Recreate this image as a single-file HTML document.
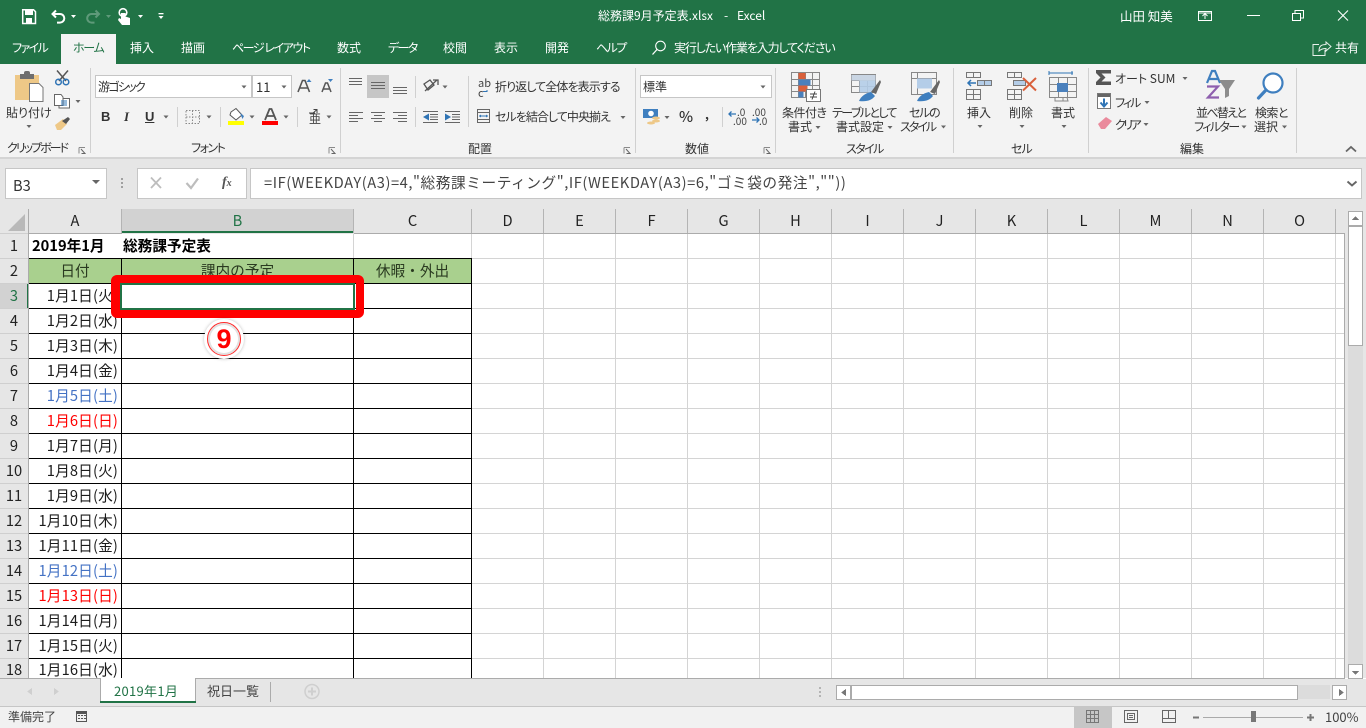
<!DOCTYPE html>
<html lang="ja"><head><meta charset="utf-8"><title>総務課9月予定表.xlsx - Excel</title>
<style>
html,body{margin:0;padding:0;width:1366px;height:728px;overflow:hidden;background:#fff}
body{position:relative;font-family:"Noto Sans CJK JP","Liberation Sans",sans-serif;font-size:12px;color:#333}
.r{position:absolute}
.t{position:absolute;white-space:nowrap;line-height:16px;font-feature-settings:"palt"}
.w{color:#fff}
.c{position:absolute;white-space:nowrap;line-height:20px;font-size:14.67px;color:#1c1c1c;text-align:right;right:1248px;letter-spacing:.15px}
.n{position:absolute;left:0;width:28px;text-align:center;line-height:20px;font-size:14.67px;color:#222}
.h{position:absolute;top:211px;line-height:20px;font-size:14.67px;text-align:center;color:#222}
svg{position:absolute;left:0;top:0}
</style></head><body>
<!-- backgrounds -->
<div class="r" style="left:0;top:0;width:1366px;height:64px;background:#217346"></div>
<div class="r" style="left:61px;top:34px;width:55px;height:30px;background:#f3f3f3"></div>
<div class="r" style="left:0;top:64px;width:1366px;height:93px;background:#f3f3f3"></div>
<div class="r" style="left:0;top:157px;width:1366px;height:2px;background:#d4d4d4"></div>
<div class="r" style="left:0;top:159px;width:1366px;height:519px;background:#e6e6e6"></div>
<div class="r" style="left:5px;top:168px;width:100px;height:29px;background:#fff;border:1px solid #c6c6c6"></div>
<div class="r" style="left:137px;top:168px;width:108px;height:29px;background:#fff;border:1px solid #c6c6c6"></div>
<div class="r" style="left:250px;top:168px;width:1110px;height:29px;background:#fff;border:1px solid #c6c6c6"></div>
<!-- sheet -->
<div class="r" style="left:29px;top:234px;width:1315px;height:444px;background:#fff"></div>
<div class="r" style="left:122px;top:209px;width:231px;height:22px;background:#d2d2d2"></div>
<div class="r" style="left:122px;top:231px;width:232px;height:2px;background:#217346"></div>
<div class="r" style="left:0;top:284px;width:28px;height:24px;background:#d2d2d2"></div>
<div class="r" style="left:27px;top:283px;width:2px;height:25px;background:#217346"></div>
<div class="r" style="left:29px;top:259px;width:442px;height:24px;background:#a9d08e"></div>

<svg width="1366" height="728" viewBox="0 0 1366 728" xmlns="http://www.w3.org/2000/svg" shape-rendering="crispEdges">
<!-- grid lines -->
<path fill="none" stroke="#d4d4d4" stroke-width="1" d="M472 258.5H1344M472 283.5H1344M472 308.5H1344M472 333.5H1344M472 358.5H1344M472 383.5H1344M472 408.5H1344M472 433.5H1344M472 458.5H1344M472 483.5H1344M472 508.5H1344M472 533.5H1344M472 558.5H1344M472 583.5H1344M472 608.5H1344M472 633.5H1344M472 658.5H1344
M543.5 234V678M615.5 234V678M687.5 234V678M759.5 234V678M831.5 234V678M903.5 234V678M975.5 234V678M1047.5 234V678M1119.5 234V678M1191.5 234V678M1263.5 234V678M1335.5 234V678M353.5 234V258M471.5 234V258"/>
<!-- black table lines -->
<path fill="none" stroke="#000" stroke-width="1" d="M29 258.5H472M29 283.5H472M29 308.5H472M29 333.5H472M29 358.5H472M29 383.5H472M29 408.5H472M29 433.5H472M29 458.5H472M29 483.5H472M29 508.5H472M29 533.5H472M29 558.5H472M29 583.5H472M29 608.5H472M29 633.5H472M29 658.5H472M121.5 258V678M353.5 258V678M471.5 258V678"/>
<!-- headers borders -->
<path fill="none" stroke="#ababab" stroke-width="1" d="M28.5 209V678M29 233.5H122M354 233.5H1345M1344.5 233V678M0 678.5H1345"/>
<path fill="none" stroke="#b4b4b4" stroke-width="1" d="M121.5 209V233M353.5 209V233M471.5 209V233M543.5 209V233M615.5 209V233M687.5 209V233M759.5 209V233M831.5 209V233M903.5 209V233M975.5 209V233M1047.5 209V233M1119.5 209V233M1191.5 209V233M1263.5 209V233M1335.5 209V233"/>
<path fill="none" stroke="#cfcfcf" stroke-width="1" d="M0 233.5H28M0 258.5H28M0 283.5H28M0 308.5H28M0 333.5H28M0 358.5H28M0 383.5H28M0 408.5H28M0 433.5H28M0 458.5H28M0 483.5H28M0 508.5H28M0 533.5H28M0 558.5H28M0 583.5H28M0 608.5H28M0 633.5H28M0 658.5H28"/>
<g shape-rendering="auto">
<polygon points="25,214 25,231 8,231" fill="#b9b9b9"/>
<!-- QAT -->
<path d="M22.7 9.7H33.5L35.5 11.7V23.5H22.7Z" fill="none" stroke="#fff" stroke-width="1.5"/>
<rect x="25" y="10" width="8" height="5" fill="#fff"/><rect x="26" y="18" width="6" height="5.5" fill="#fff"/>
<path d="M56 10.5 52.5 14 56 17.5M53 14H60A4.3 4.3 0 0 1 60 22.6H57" fill="none" stroke="#fff" stroke-width="2"/>
<path d="M95.5 10.5 99 14 95.5 17.5M98.5 14H91.5A4.3 4.3 0 0 0 91.5 22.6H94.5" fill="none" stroke="#5f9a7a" stroke-width="2"/>
<path d="M71 15h5l-2.500 3z" fill="#fff"/><path d="M106 15h5l-2.500 3z" fill="#5f9a7a"/>
<path d="M138 15h5l-2.500 3zM158.500 16h5l-2.500 3z" fill="#fff"/><rect x="158.500" y="13" width="5" height="1.300" fill="#fff"/>
<circle cx="123" cy="12.500" r="3.800" fill="none" stroke="#fff" stroke-width="1.600"/>
<path d="M121 13V19L119 18 118 20 122 25H130V18L125.500 16.500V13Z" fill="#fff"/>
<!-- window controls -->
<path d="M1198.500 11.500H1211.500V20.500H1198.500ZM1205 19V14M1202.500 16 1205 13.500 1207.500 16M1198.500 13H1211.500" fill="none" stroke="#fff" stroke-width="1"/>
<path d="M1247 15.500H1260" stroke="#fff" stroke-width="1"/>
<path d="M1292.500 13.500H1300.500V20.500H1292.500ZM1295 13V10.500H1303.500V18H1301" fill="none" stroke="#fff" stroke-width="1"/>
<path d="M1338 10.500 1348 20.500M1348 10.500 1338 20.500" stroke="#fff" stroke-width="1.100"/>
<path d="M1319 44.500H1313V55.500H1325V50M1319 51C1319 45.500 1322 44.500 1326 44.500V42L1331 46.500 1326 51V48.500C1323 48.500 1321 49 1319 51Z" fill="none" stroke="#e8f0ea" stroke-width="1"/>
<circle cx="660.500" cy="46" r="4.800" fill="none" stroke="#fff" stroke-width="1.100"/><path d="M657 49.500 652.500 54.500" stroke="#fff" stroke-width="1.300"/>
<!-- clipboard -->
<path d="M15 75H39V84H29V100H15Z" fill="#eec887"/>
<rect x="20" y="74" width="14" height="5" fill="#6e6e6e"/><rect x="24" y="71" width="6" height="5" rx="2" fill="#6e6e6e"/>
<path d="M29.500 83.500H39L43 87.500V101.500H29.500Z" fill="#fff" stroke="#777" stroke-width="1"/>
<path d="M57 70.500 66 81M68 70.500 59 81" stroke="#555" stroke-width="1.500" fill="none"/>
<circle cx="58.500" cy="82" r="2.800" fill="none" stroke="#2f74b5" stroke-width="1.500"/><circle cx="66" cy="82" r="2.800" fill="none" stroke="#2f74b5" stroke-width="1.500"/>
<path d="M54.500 94.500H61L63 97V105.500H54.500ZM62.500 98.500H69.500V108H59V105.500" fill="#fff" stroke="#666" stroke-width="1"/>
<path d="M61 101H67M61 103H67M61 105H67" stroke="#2f74b5" stroke-width="1"/>
<path d="M55 125 63 119 67 124 61 130H57Z" fill="#eec887"/><path d="M62 121 68 117 70 119 66 124Z" fill="#555"/>
<!-- font -->
<rect x="95.500" y="75.500" width="156" height="22" fill="#fff" stroke="#c6c6c6"/><rect x="252.500" y="75.500" width="39" height="22" fill="#fff" stroke="#c6c6c6"/>
<path d="M298 92 302.500 80.500H305L309.500 92M300 88H307.500" fill="none" stroke="#555" stroke-width="1.600"/><path d="M306.500 82l2.500-3 2.500 3z" fill="#3f7fbf"/>
<path d="M322 92 325.500 83H327.500L331 92M323.500 89H329.500" fill="none" stroke="#555" stroke-width="1.500"/><path d="M328 79h5l-2.500 3z" fill="#3f7fbf"/>
<path d="M186 110.500H199.500V123.500H186Z" fill="none" stroke="#888" stroke-width="1" stroke-dasharray="1.500 1.500"/><path d="M192.500 110.500V123.500M186 117H199.500" stroke="#888" stroke-width="1" stroke-dasharray="1.500 1.500"/>
<path d="M231 112 236 108.500 242 115 236 120 230 115Z" fill="#fff" stroke="#555" stroke-width="1"/><path d="M240 113 244 116 242.500 119Z" fill="#3f7fbf"/>
<rect x="228" y="121" width="16" height="4" fill="#ffff00"/>
<path d="M265 120 269.500 109H271.500L276 120M266.500 116H274.500" fill="none" stroke="#555" stroke-width="1.800"/><rect x="262" y="121" width="16" height="4" fill="#ff0000"/>
<path d="M309 113H315M313.500 109.500H317V113M312 114 317 109.500" stroke="#444" stroke-width="1" fill="none"/>
<!-- align -->
<rect x="367" y="75" width="22" height="23" fill="#c6c6c6"/>
<path d="M349 78.500H362M349 81.500H362M349 84.500H362M371 82.500H385M371 85.500H385M371 88.500H385M393 87.500H407M393 90.500H407M393 93.500H407" fill="none" stroke="#666" stroke-width="1"/>
<path d="M349 112.500H363M349 115.500H358M349 118.500H363M349 121.500H358M371 112.500H385M374 115.500H382M371 118.500H385M374 121.500H382M393 112.500H407M398 115.500H407M393 118.500H407M398 121.500H407" stroke="#666" stroke-width="1"/>
<path d="M430 114.500H438M430 117H438M430 119.500H438M423 111.500H438M423 122.500H438" stroke="#666" stroke-width="1"/><path d="M423 117 429 113.500V120.500Z" fill="#2f74b5"/>
<path d="M452 114.500H460M452 117H460M452 119.500H460M445 111.500H460M445 122.500H460" stroke="#666" stroke-width="1"/><path d="M445 113.500V120.500L451 117Z" fill="#2f74b5"/>
<path d="M425 91 437 80M433 80H438V85" fill="none" stroke="#555" stroke-width="1.300"/><path d="M424 84 430 80 434 85 428 90Z" fill="none" stroke="#555" stroke-width="1.300"/>
<path d="M477.500 109.500H489.500V122.500H477.500ZM477.500 112.500H489.500M477.500 119.500H489.500" fill="none" stroke="#666"/><path d="M479 116H488" stroke="#2f74b5"/><path d="M479 116 481 114.500V117.500ZM488 116 486 114.500V117.500Z" fill="#2f74b5"/>
<path d="M487 90V91.500H483" fill="none" stroke="#2f74b5"/>
<!-- number -->
<rect x="640.500" y="75.500" width="131" height="22" fill="#fff" stroke="#c6c6c6"/>
<rect x="643" y="109" width="15" height="9" fill="#3f7fbf"/><circle cx="651" cy="113.500" r="2.800" fill="#fff"/>
<ellipse cx="656" cy="118" rx="4" ry="1.500" fill="#eec887"/><ellipse cx="656" cy="121" rx="4" ry="1.500" fill="#eec887"/><ellipse cx="651" cy="123" rx="4" ry="1.500" fill="#eec887"/>
<path d="M729 114H736M731.500 111.500 729 114 731.500 116.500" fill="none" stroke="#2f74b5" stroke-width="1.300"/><path d="M752 120H759M756.500 117.500 759 120 756.500 122.500" fill="none" stroke="#2f74b5" stroke-width="1.300"/>
<!-- styles: conditional -->
<path d="M791.500 72.500H819.500V97.500H791.500ZM791.500 79.500H819.500M791.500 85.500H819.500M791.500 91.500H819.500M798.500 72.500V97.500M805.500 72.500V97.500M812.500 72.500V97.500" fill="none" stroke="#888"/>
<rect x="798.500" y="73" width="7" height="6" fill="#d9603b"/><rect x="798.500" y="79.500" width="12" height="6" fill="#4a80bc"/><rect x="798.500" y="85.500" width="9" height="6" fill="#d9603b"/><rect x="798.500" y="91.500" width="5" height="6" fill="#4a80bc"/>
<rect x="806.500" y="89.500" width="14" height="12" fill="#fff" stroke="#777"/><path d="M810 94H817M810 97H817M815 91.500 812 99.500" stroke="#444" fill="none"/>
<!-- table -->
<path d="M851.500 74.500H875.500V92.500H851.500ZM851.500 80.500H875.500M851.500 86.500H875.500M859.500 74.500V92.500M867.500 74.500V92.500" fill="none" stroke="#888"/><rect x="859.500" y="80.500" width="16" height="12" fill="#b4cde8" opacity=".9"/><rect x="851.500" y="75" width="24" height="5.500" fill="#c9d5e3"/>
<path d="M871 92 880 80 881 82 876 94Z" fill="#666"/><path d="M859 101C861 96 866 93 871 92L875 96C872 100 867 102 859 101Z" fill="#3f7fbf"/>
<!-- cell style -->
<path d="M911.500 72.500H936.500V94.500H911.500ZM911.500 78.500H936.500M917.500 72.500V94.500" fill="none" stroke="#888"/><rect x="917" y="78.500" width="15" height="10" fill="#b4cde8"/>
<path d="M930 92 939 80 940 82 935 94Z" fill="#666"/><path d="M917 101C919 96 924 93 929 92L933 96C930 100 925 102 917 101Z" fill="#3f7fbf"/>
<!-- insert -->
<path d="M966.500 72.500H980.500V77.500H966.500ZM973.500 72.500V77.500M966.500 89.500H980.500V99.500H966.500ZM966.500 94.500H980.500M973.500 89.500V99.500" fill="none" stroke="#777"/>
<path d="M977.500 80.500H991.500V85.500H977.500ZM984.500 80.500V85.500" fill="#b4cde8" stroke="#777"/><path d="M968 83H976M971 80 968 83 971 86" fill="none" stroke="#2f74b5" stroke-width="1.500"/>
<!-- delete -->
<path d="M1007.500 72.500H1021.500V77.500H1007.500ZM1014.500 72.500V77.500M1007.500 89.500H1021.500V99.500H1007.500ZM1007.500 94.500H1021.500M1014.500 89.500V99.500" fill="none" stroke="#777"/>
<rect x="1013.500" y="80.500" width="12" height="5" fill="#b4cde8" stroke="#777"/><path d="M1023 78 1036 90.500M1036 78 1023 90.500" stroke="#d9603b" stroke-width="2"/>
<!-- format -->
<path d="M1049.500 77.500H1076.500V97.500H1049.500ZM1049.500 84.500H1076.500M1049.500 91.500H1076.500M1058.500 77.500V97.500M1067.500 77.500V97.500" fill="none" stroke="#888"/>
<rect x="1057" y="83" width="11" height="9" fill="#4a80bc"/><path d="M1049.500 73H1071M1053 73H1073" stroke="#2f74b5"/><path d="M1049 71V75M1072 71V75" stroke="#2f74b5"/>
<path d="M1055 97.500V101H1063V97.500M1063 101H1068L1067 97.500" fill="none" stroke="#888"/>
<!-- edit -->
<path d="M1096 70H1111V73.500H1101.500L1105.500 77.500 1101.500 81.500H1111V85H1096V82L1100.500 77.500 1096 73Z" fill="#555"/>
<rect x="1097.500" y="93.500" width="13" height="15" fill="#fff" stroke="#777"/><rect x="1098" y="94" width="12" height="3" fill="#666"/><path d="M1104 98.500V106M1100.500 102.500 1104 106.500 1107.500 102.500" fill="none" stroke="#2f74b5" stroke-width="2"/>
<path d="M1098 124 1106 117 1112 121 1105 129H1101Z" fill="#ea8a9c"/>
<path d="M1207 83 1212 71H1215L1220 83M1209 79H1218" fill="none" stroke="#3f7fbf" stroke-width="2.200"/>
<path d="M1207 86.500H1218L1208 97.500H1219" fill="none" stroke="#8e5fae" stroke-width="2.200"/>
<path d="M1219 80H1235L1229 89V96L1225 98V89Z" fill="#8c8c8c"/>
<circle cx="1273" cy="83" r="9.500" fill="#fff" stroke="#3f7fbf" stroke-width="2.200"/><path d="M1266 90 1258.500 98" stroke="#3f7fbf" stroke-width="3.200" stroke-linecap="round"/>
<path d="M1346 151.500 1351 147 1356 151.500" fill="none" stroke="#666" stroke-width="1.800"/>
<!-- launcher icons -->
<path d="M79 147.500H85M79 147.500V153.500M329 147.500H335M329 147.500V153.500M624 147.500H630M624 147.500V153.500M764 147.500H770M764 147.500V153.500" stroke="#8a8a8a" fill="none"/>
<path d="M81 149 85 153.500H81.500M331 149 335 153.500H331.500M626 149 630 153.500H626.500M766 149 770 153.500H766.500" stroke="#666" fill="none"/>
<!-- carets -->
<path fill="#666" d="M26.500 125h5l-2.500 3zM75.500 100h5l-2.500 3zM241.500 85.500h5l-2.500 3zM281.500 85.500h5l-2.500 3zM163.500 115.500h5l-2.500 3zM206.500 115.500h5l-2.500 3zM249.500 115.500h5l-2.500 3zM283.500 115.500h5l-2.500 3zM326.500 115.500h5l-2.500 3zM442.500 85.500h5l-2.500 3zM620.500 116h5l-2.500 3zM760.500 85.500h5l-2.500 3zM664.500 116h5l-2.500 3zM815.500 126h5l-2.500 3zM887.500 126h5l-2.500 3zM941 125.500h5l-2.500 3zM977.500 125h5l-2.500 3zM1019.500 125h5l-2.500 3zM1061.500 125h5l-2.500 3zM1182.500 77h5l-2.500 3zM1144.500 101h5l-2.500 3zM1143.500 123h5l-2.500 3zM1241.500 125.500h5l-2.500 3zM1282 125.500h5l-2.500 3zM92 180h8l-4 4z"/>
<!-- formula bar glyphs -->
<path d="M151 177.500 161 188M161 177.500 151 188" stroke="#bdbdbd" stroke-width="1.800"/>
<path d="M186.500 183 191 188 198 178.500" fill="none" stroke="#bdbdbd" stroke-width="2.200"/>
<path d="M1347.500 181.500 1352 185.500 1356.500 181.500" fill="none" stroke="#666" stroke-width="1.900"/>
</g>
<g fill="#a0a0a0"><rect x="121" y="178" width="2" height="2"/><rect x="121" y="182" width="2" height="2"/><rect x="121" y="186" width="2" height="2"/></g>
<!-- ribbon seps -->
<path stroke="#d0d0d0" fill="none" d="M90.500 68V153M340.500 68V153M635.500 68V153M775.500 68V153M953.500 68V153M1088.500 68V153M1296.500 68V153M415.500 76V98M415.500 107V127M468.500 76V127M177.500 107V127M220.500 107V127M297.500 107V127M722.500 107V127"/>
<!-- vertical scrollbar -->
<rect x="1348" y="226" width="15" height="452" fill="#dcdcdc"/>
<rect x="1348.500" y="211.500" width="14" height="14" fill="#fff" stroke="#ababab"/>
<rect x="1348.500" y="226.500" width="14" height="119" fill="#fff" stroke="#ababab"/>
<rect x="1348.500" y="664.500" width="14" height="14" fill="#fff" stroke="#ababab"/>
<path fill="#777" d="M1352 220h7l-3.500-4zM1352 671h7l-3.500 4z"/>
<!-- bottom -->
<rect x="0" y="679" width="1366" height="27" fill="#e6e6e6"/>
<rect x="0" y="706" width="1366" height="1" fill="#c6c6c6"/>
<rect x="0" y="707" width="1366" height="21" fill="#f1f1f1"/>
<path d="M0 678.500H1345" stroke="#ababab"/>
<rect x="100" y="678" width="96" height="25" fill="#fff"/>
<path d="M100.500 678V703M195.500 678V703" stroke="#ababab" fill="none"/>
<rect x="100" y="701" width="96" height="2" fill="#217346"/>
<path d="M270.500 682V702" stroke="#ababab"/>
<g shape-rendering="auto"><circle cx="312" cy="691.500" r="7" fill="none" stroke="#cfcfcf" stroke-width="1.500"/><path d="M308 691.500H316M312 687.500V695.500" stroke="#cfcfcf" stroke-width="2"/></g>
<path fill="#cfcfcf" d="M32 688v7l-5-3.500zM54 688v7l5-3.500z"/>
<g fill="#b4b4b4"><rect x="819" y="687" width="2" height="2"/><rect x="819" y="691" width="2" height="2"/><rect x="819" y="695" width="2" height="2"/></g>
<rect x="851" y="685" width="479" height="14" fill="#dcdcdc"/>
<rect x="836.500" y="685.500" width="14" height="14" fill="#fff" stroke="#ababab"/>
<rect x="851.500" y="685.500" width="446" height="14" fill="#fff" stroke="#ababab"/>
<rect x="1332.500" y="685.500" width="14" height="14" fill="#fff" stroke="#ababab"/>
<path fill="#777" d="M846 689v7l-5-3.500zM1339 689v7l5-3.500z"/>
<!-- status -->
<rect x="1074" y="706" width="38" height="22" fill="#c6c6c6"/>
<path fill="none" stroke="#777" d="M1086.500 710.500H1098.500V722.500H1086.500ZM1090.500 710.500V722.500M1094.500 710.500V722.500M1086.500 714.500H1098.500M1086.500 718.500H1098.500"/>
<path fill="none" stroke="#666" d="M1124.500 710.500H1137.500V722.500H1124.500ZM1127.500 713.500H1134.500V719.500H1127.500ZM1129 715.500H1133M1129 717.500H1133"/>
<path fill="none" stroke="#666" d="M1162.500 710.500H1175.500V722.500H1162.500ZM1168.500 710.500V718.500H1162.500M1168.500 718.500H1175.500"/>
<path d="M1203 717.500H1303" stroke="#aaa"/>
<rect x="1251" y="711" width="5" height="11" fill="#777"/>
<path d="M1193 717.500H1199M1307 717.500H1314M1310.500 714V721" stroke="#777" stroke-width="2"/>
<g fill="#555"><rect x="76" y="711" width="11" height="2" /><rect x="76.500" y="713.500" width="10" height="8" fill="none" stroke="#555"/><rect x="78" y="715" width="2" height="1"/><rect x="81" y="715" width="2" height="1"/><rect x="84" y="715" width="2" height="1"/><rect x="78" y="718" width="2" height="1"/><rect x="81" y="718" width="2" height="1"/><rect x="84" y="718" width="2" height="1"/></g>
</svg>

<!-- title / tabs -->
<span class="t w" style="left:598px;top:8px">総務課9月予定表.xlsx</span>
<span class="t w" style="left:724px;top:8px">-</span>
<span class="t w" style="left:737px;top:8px">Excel</span>
<span class="t w" style="left:1120px;top:8px;font-size:12.500px">山田 知美</span>
<span class="t w" style="left:12px;top:40px;letter-spacing:-1.600px">ファイル</span>
<span class="t" style="left:73px;top:40px;color:#217346;letter-spacing:-1.300px">ホーム</span>
<span class="t w" style="left:130px;top:40px">挿入</span>
<span class="t w" style="left:181px;top:40px">描画</span>
<span class="t w" style="left:232px;top:40px;letter-spacing:-1.450px">ページ レイアウト</span>
<span class="t w" style="left:337px;top:40px">数式</span>
<span class="t w" style="left:388px;top:40px;letter-spacing:-1.600px">データ</span>
<span class="t w" style="left:443px;top:40px">校閲</span>
<span class="t w" style="left:494px;top:40px">表示</span>
<span class="t w" style="left:545px;top:40px">開発</span>
<span class="t w" style="left:596px;top:40px;letter-spacing:-1.600px">ヘルプ</span>
<span class="t w" style="left:674px;top:40px;letter-spacing:-1.150px">実行したい作業を入力してください</span>
<span class="t w" style="left:1335px;top:40px">共有</span>
<!-- ribbon text -->
<span class="t" style="left:6px;top:105px">貼り付け</span>
<span class="t" style="left:7px;top:140px;letter-spacing:-2px">クリップボード</span>
<span class="t" style="left:98px;top:79px;letter-spacing:-1.700px">游ゴシック</span>
<span class="t" style="left:256px;top:79px;font-size:13px">11</span>
<span class="t" style="left:101px;top:109px;font-weight:700;font-size:13px;font-family:'Liberation Sans',sans-serif">B</span>
<span class="t" style="left:124px;top:109px;font-weight:700;font-style:italic;font-size:13px;font-family:'Liberation Serif',serif">I</span>
<span class="t" style="left:145px;top:109px;font-weight:700;font-size:13px;text-decoration:underline;font-family:'Liberation Sans',sans-serif">U</span>
<span class="t" style="left:309px;top:112px;font-size:12px;line-height:14px;color:#444;font-feature-settings:normal">亜</span>
<span class="t" style="left:191px;top:140px;letter-spacing:-1.500px">フォント</span>
<span class="t" style="left:478px;top:78px;font-size:11px;line-height:10px;color:#444">ab<br>c</span>
<span class="t" style="left:495px;top:79px;letter-spacing:-.9px">折り返して全体を表示する</span>
<span class="t" style="left:495px;top:109px;letter-spacing:-.95px">セルを結合して中央揃え</span>
<span class="t" style="left:468px;top:141px">配置</span>
<span class="t" style="left:643px;top:79px">標準</span>
<span class="t" style="left:679px;top:109px;font-size:15px;font-weight:500">%</span>
<span class="t" style="left:705px;top:107px;font-size:12px;font-weight:700">,</span>
<span class="t" style="left:737px;top:107px;font-size:10px;line-height:10px;color:#444">.0</span>
<span class="t" style="left:733px;top:116px;font-size:10px;line-height:10px;color:#444">.00</span>
<span class="t" style="left:752px;top:107px;font-size:10px;line-height:10px;color:#444">.00</span>
<span class="t" style="left:759px;top:116px;font-size:10px;line-height:10px;color:#444">.0</span>
<span class="t" style="left:685px;top:141px">数値</span>
<span class="t" style="left:782px;top:105px;letter-spacing:-.5px">条件付き</span>
<span class="t" style="left:788px;top:119px">書式</span>
<span class="t" style="left:832px;top:105px;letter-spacing:-1.600px">テーブルとして</span>
<span class="t" style="left:836px;top:119px">書式設定</span>
<span class="t" style="left:909px;top:105px;letter-spacing:-1.300px">セルの</span>
<span class="t" style="left:900px;top:119px;letter-spacing:-2px">スタイル</span>
<span class="t" style="left:846px;top:141px;letter-spacing:-1.600px">スタイル</span>
<span class="t" style="left:967px;top:105px">挿入</span>
<span class="t" style="left:1009px;top:105px">削除</span>
<span class="t" style="left:1051px;top:105px">書式</span>
<span class="t" style="left:1011px;top:141px;letter-spacing:-1px">セル</span>
<span class="t" style="left:1115px;top:71px">オート SUM</span>
<span class="t" style="left:1115px;top:95px;letter-spacing:-2px">フィル</span>
<span class="t" style="left:1115px;top:117px;letter-spacing:-2.500px">クリア</span>
<span class="t" style="left:1196px;top:105px;letter-spacing:-1.700px">並べ替えと</span>
<span class="t" style="left:1194px;top:119px;letter-spacing:-1.600px">フィルター</span>
<span class="t" style="left:1255px;top:105px;letter-spacing:-.6px">検索と</span>
<span class="t" style="left:1254px;top:119px">選択</span>
<span class="t" style="left:1180px;top:141px">編集</span>
<!-- formula bar -->
<span class="t" style="left:13px;top:178px;font-size:14.670px;font-feature-settings:normal">B3</span>
<span class="t" style="left:222px;top:175px;font-size:14px;font-style:italic;font-weight:700;font-family:'Liberation Serif',serif;color:#555">f<span style="font-size:10px">x</span></span>
<span class="t" style="left:264px;top:175px;font-size:14.670px;color:#444;font-feature-settings:normal;letter-spacing:.57px">=IF(WEEKDAY(A3)=4,"総務課ミーティング",IF(WEEKDAY(A3)=6,"ゴミ袋の発注",""))</span>
<!-- col headers -->
<div class="h" style="left:29px;width:92px">A</div>
<div class="h" style="left:122px;width:231px;color:#217346">B</div>
<div class="h" style="left:354px;width:117px">C</div>
<div class="h" style="left:472px;width:71px">D</div>
<div class="h" style="left:544px;width:71px">E</div>
<div class="h" style="left:616px;width:71px">F</div>
<div class="h" style="left:688px;width:71px">G</div>
<div class="h" style="left:760px;width:71px">H</div>
<div class="h" style="left:832px;width:71px">I</div>
<div class="h" style="left:904px;width:71px">J</div>
<div class="h" style="left:976px;width:71px">K</div>
<div class="h" style="left:1048px;width:71px">L</div>
<div class="h" style="left:1120px;width:71px">M</div>
<div class="h" style="left:1192px;width:71px">N</div>
<div class="h" style="left:1264px;width:71px">O</div>
<!-- row headers -->
<div class="n" style="top:236px">1</div><div class="n" style="top:261px">2</div><div class="n" style="top:286px;color:#217346">3</div><div class="n" style="top:311px">4</div><div class="n" style="top:336px">5</div><div class="n" style="top:361px">6</div><div class="n" style="top:386px">7</div><div class="n" style="top:411px">8</div><div class="n" style="top:436px">9</div><div class="n" style="top:461px">10</div><div class="n" style="top:486px">11</div><div class="n" style="top:511px">12</div><div class="n" style="top:536px">13</div><div class="n" style="top:561px">14</div><div class="n" style="top:586px">15</div><div class="n" style="top:611px">16</div><div class="n" style="top:636px">17</div><div class="n" style="top:660px;height:18px;overflow:hidden">18</div>
<!-- cells -->
<span class="t" style="left:32px;top:238px;font-size:14.670px;font-weight:700;color:#000;font-feature-settings:normal">2019年1月</span>
<span class="t" style="left:123px;top:238px;font-size:14.670px;font-weight:700;color:#000;font-feature-settings:normal">総務課予定表</span>
<span class="t" style="left:29px;width:92px;text-align:center;top:263px;font-size:14.670px;color:#2a3a20;font-feature-settings:normal">日付</span>
<span class="t" style="left:122px;width:231px;text-align:center;top:263px;font-size:14.670px;color:#2a3a20;font-feature-settings:normal">課内の予定</span>
<span class="t" style="left:354px;width:117px;text-align:center;top:263px;font-size:14.670px;color:#2a3a20;font-feature-settings:normal">休暇・外出</span>
<div class="c" style="top:286px">1月1日(火)</div>
<div class="c" style="top:311px">1月2日(水)</div>
<div class="c" style="top:336px">1月3日(木)</div>
<div class="c" style="top:361px">1月4日(金)</div>
<div class="c" style="top:386px;color:#4472c4">1月5日(土)</div>
<div class="c" style="top:411px;color:#ff0000">1月6日(日)</div>
<div class="c" style="top:436px">1月7日(月)</div>
<div class="c" style="top:461px">1月8日(火)</div>
<div class="c" style="top:486px">1月9日(水)</div>
<div class="c" style="top:511px">1月10日(木)</div>
<div class="c" style="top:536px">1月11日(金)</div>
<div class="c" style="top:561px;color:#4472c4">1月12日(土)</div>
<div class="c" style="top:586px;color:#ff0000">1月13日(日)</div>
<div class="c" style="top:611px">1月14日(月)</div>
<div class="c" style="top:636px">1月15日(火)</div>
<div class="c" style="top:660px;height:18px;overflow:hidden">1月16日(水)</div>
<!-- tabs text -->
<span class="t" style="left:114px;top:683px;font-size:13px;color:#217346;font-feature-settings:normal;letter-spacing:.3px">2019年1月</span>
<span class="t" style="left:207px;top:683px;font-size:13px;color:#444;font-feature-settings:normal">祝日一覧</span>
<span class="t" style="left:8px;top:709px;font-size:12px;color:#444;font-feature-settings:normal">準備完了</span>
<span class="t" style="left:1325px;top:709px;font-size:13px;color:#444">100%</span>
<!-- selection + annotation -->
<div class="r" style="left:120px;top:283px;width:231px;height:23px;border:2px solid #217346;background:#fff"></div>
<div class="r" style="left:111px;top:275px;width:236px;height:27px;border:8px solid #ff0000;border-left-width:9px;border-radius:6px"></div>
<div class="r" style="left:204px;top:319px;width:40px;height:40px;border-radius:50%;background:#fff;box-shadow:0 0 3px rgba(0,0,0,.25)"></div>
<div class="r" style="left:206.500px;top:321.500px;width:32px;height:32px;border-radius:50%;border:1.500px solid #ff2a2a;background:#fff;box-shadow:inset 0 0 0 2px #e2e2e2"></div>
<span class="t" style="left:207px;width:34px;text-align:center;top:329px;line-height:20px;font-size:27px;font-weight:900;color:#ff0000;font-family:'Liberation Sans',sans-serif">9</span>
</body></html>
